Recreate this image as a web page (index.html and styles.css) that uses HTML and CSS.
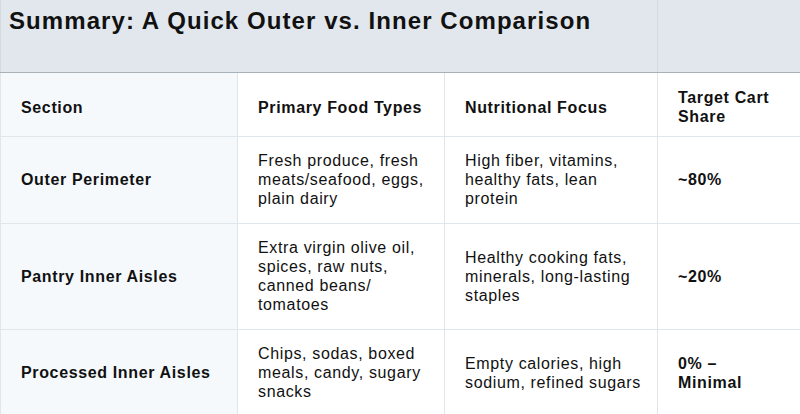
FILE: index.html
```html
<!DOCTYPE html>
<html lang="en">
<head>
<meta charset="utf-8">
<title>Summary</title>
<link rel="stylesheet" href="styles.css">
</head>
<body>
<table class="summary">
  <colgroup>
    <col class="c1">
    <col class="c2">
    <col class="c3">
    <col class="c4">
  </colgroup>
  <thead>
    <tr class="title-row">
      <th class="title" colspan="3">Summary: A Quick Outer vs. Inner Comparison</th>
      <th class="title-empty"></th>
    </tr>
    <tr class="head-row">
      <th class="first">Section</th>
      <th>Primary Food Types</th>
      <th>Nutritional Focus</th>
      <th class="last">Target Cart Share</th>
    </tr>
  </thead>
  <tbody>
    <tr class="r1">
      <th class="first">Outer Perimeter</th>
      <td>Fresh produce, fresh meats/seafood, eggs, plain dairy</td>
      <td>High fiber, vitamins, healthy fats, lean protein</td>
      <td class="share last">~80%</td>
    </tr>
    <tr class="r2">
      <th class="first">Pantry Inner Aisles</th>
      <td>Extra virgin olive oil, spices, raw nuts, canned beans/ tomatoes</td>
      <td>Healthy cooking fats, minerals, long-lasting staples</td>
      <td class="share last">~20%</td>
    </tr>
    <tr class="r3">
      <th class="first">Processed Inner Aisles</th>
      <td>Chips, sodas, boxed meals, candy, sugary snacks</td>
      <td>Empty calories, high sodium, refined sugars</td>
      <td class="share last">0% – Minimal</td>
    </tr>
  </tbody>
</table>
</body>
</html>
```
FILE: styles.css
```css
html, body {
  margin: 0;
  padding: 0;
  background: #ffffff;
}
body {
  font-family: "Liberation Sans", Arial, Helvetica, sans-serif;
  color: #111111;
  overflow: hidden;
}
.summary {
  border-collapse: collapse;
  table-layout: fixed;
  width: 800px;
  font-size: 16px;
  line-height: 19px;
  letter-spacing: 0.04em;
}
.c1 { width: 237px; }
.c2 { width: 207px; }
.c3 { width: 213px; }
.c4 { width: 143px; }

.summary th,
.summary td {
  border: 1px solid #dfe6ec;
  text-align: left;
  vertical-align: middle;
  padding: 14px 15px 15px 20px;
}
.summary th { font-weight: bold; }
.summary td { font-weight: normal; }
.summary td.share { font-weight: bold; }
.summary .last { padding-right: 22px; }

.title-row th {
  background: #e1e7ec;
  border-color: #d3dae0;
  border-bottom: 1px solid #a9b1b8;
  border-top: none;
  vertical-align: top;
}
.summary th.title {
  font-size: 24px;
  line-height: 28px;
  letter-spacing: 0.045em;
  padding: 7px 8px 37px;
  white-space: nowrap;
}
.summary th.title-empty {
  padding: 0;
}
.head-row th {
  background: #ffffff;
  padding-top: 15px;
  padding-bottom: 10px;
}
.summary th.first {
  background: #f5f9fc;
}
```
